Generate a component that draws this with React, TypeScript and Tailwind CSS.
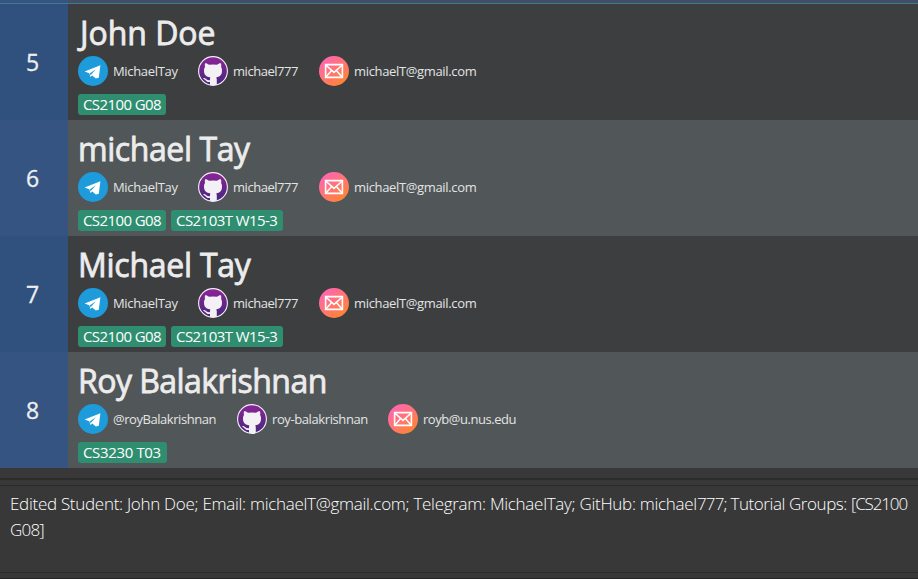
import type { ReactNode } from "react";

type Field = { text: string; cls: string };
type Student = {
  id: number;
  name: Field;
  telegram: Field;
  github: Field;
  email: Field;
  tags: Field[];
};

const michaelT: Field = { text: "MichaelTay", cls: "w-[65px] tracking-[-0.33px]" };
const michaelG: Field = { text: "michael777", cls: "w-[66px] tracking-[-0.47px]" };
const michaelE: Field = { text: "michaelT@gmail.com", cls: "tracking-[-0.34px]" };
const cs2100: Field = { text: "CS2100 G08", cls: "w-[88px] tracking-[-0.6px]" };
const cs2103: Field = { text: "CS2103T W15-3", cls: "w-[112px] tracking-[-0.55px]" };

const students: Student[] = [
  { id: 5, name: { text: "John Doe", cls: "pl-[2px] tracking-[-0.05px]" }, telegram: michaelT, github: michaelG, email: michaelE, tags: [cs2100] },
  { id: 6, name: { text: "michael Tay", cls: "tracking-[-0.42px]" }, telegram: michaelT, github: michaelG, email: michaelE, tags: [cs2100, cs2103] },
  { id: 7, name: { text: "Michael Tay", cls: "tracking-[-0.25px]" }, telegram: michaelT, github: michaelG, email: michaelE, tags: [cs2100, cs2103] },
  {
    id: 8,
    name: { text: "Roy Balakrishnan", cls: "tracking-[-0.55px]" },
    telegram: { text: "@royBalakrishnan", cls: "w-[104px] tracking-[-0.45px]" },
    github: { text: "roy-balakrishnan", cls: "w-[96px] tracking-[-0.4px]" },
    email: { text: "royb@u.nus.edu", cls: "tracking-[-0.45px]" },
    tags: [{ text: "CS3230 T03", cls: "w-[89px] tracking-[-0.35px]" }],
  },
];

function TelegramIcon() {
  return (
    <svg viewBox="0 0 30 30" className="size-[30px] shrink-0">
      <circle cx="15" cy="15" r="15" fill="#1e9bdb" />
      <path d="M6.6 15.6 22.4 9.2 20.8 21.8 17.8 22.4 14.2 19.4 12.4 21 11.3 17.2Z" fill="#fff" />
      <path d="M12 17.2 18 13.2 13.4 18.2 12.5 19.8Z" fill="#1e9bdb" />
    </svg>
  );
}

function GithubIcon() {
  return (
    <svg viewBox="0 0 30 30" className="size-[30px] shrink-0">
      <defs>
        <linearGradient id="purple" x1="0" y1="0" x2="0" y2="1">
          <stop offset="0" stopColor="#8c2597" />
          <stop offset="1" stopColor="#46277f" />
        </linearGradient>
      </defs>
      <circle cx="15" cy="15" r="14.4" fill="url(#purple)" stroke="#f5eff8" strokeWidth="1.1" />
      <path
        d="M7 7.4C8.4 7.2 9.8 8 11 8.8Q15 8.2 19 8.8C20.2 8 21.6 7.2 23 7.4Q23.6 9.2 23.1 11 24.2 12.6 24 15C23.8 19.2 21.8 20.8 18.2 21.4 18.8 22.2 18.8 23.2 18.8 24.4V29H12V26C8.2 26.6 8 23.9 5.4 22.7 4.9 22.1 6.2 21.9 7 22.3 8.8 23.3 9 24.8 12 24.2 12 22.8 12.1 22 12.4 21.4 8.4 20.8 6.2 19.2 6 15Q5.8 12.6 7 11 6.5 9.2 7 7.4Z"
        fill="#f3f1f5"
      />
    </svg>
  );
}

function MailIcon() {
  return (
    <svg viewBox="0 0 30 30" className="size-[30px] shrink-0">
      <defs>
        <linearGradient id="sunset" x1="0.1" y1="0.1" x2="0.8" y2="1">
          <stop offset="0" stopColor="#ff65b5" />
          <stop offset="1" stopColor="#ff862d" />
        </linearGradient>
      </defs>
      <circle cx="15" cy="15" r="15" fill="url(#sunset)" />
      <g fill="none" stroke="#fff">
        <path d="M6.6 8.6H23.4V21.4H6.6Z" strokeWidth="1.6" />
        <path d="M7 9.2 15 16.4 23 9.2M7 21 12.6 14.6M23 21 17.4 14.6" strokeWidth="1.5" />
      </g>
    </svg>
  );
}

function Contact({ icon, field }: { icon: ReactNode; field: Field }) {
  return (
    <div className="flex items-center gap-[5px]">
      {icon}
      <span className={`whitespace-nowrap text-[13px] leading-[18px] text-[#e3e4e4] ${field.cls}`}>{field.text}</span>
    </div>
  );
}

function Row({ student, index }: { student: Student; index: number }) {
  const even = index % 2 === 1;
  return (
    <div className={`flex h-[116px] ${even ? "bg-[#515658]" : "bg-[#3c3e3f]"}`}>
      <div className={`flex w-[68px] shrink-0 items-center justify-center pr-[3px] text-[23px] text-[#eeeff0] [-webkit-text-stroke:0.3px_#eeeff0] ${even ? "bg-[#355481]" : "bg-[#30507d]"}`}>
        {student.id}
      </div>
      <div className="pl-[10px] pt-[8px]">
        <div className={`h-[44px] whitespace-nowrap text-[32px] leading-[42px] text-[#ececec] [-webkit-text-stroke:0.8px_#ececec] ${student.name.cls}`}>{student.name.text}</div>
        <div className="flex gap-[20px]">
          <Contact icon={<TelegramIcon />} field={student.telegram} />
          <Contact icon={<GithubIcon />} field={student.github} />
          <Contact icon={<MailIcon />} field={student.email} />
        </div>
        <div className="mt-[8px] flex gap-[5px]">
          {student.tags.map((tag) => (
            <span key={tag.text} className={`h-[21px] whitespace-nowrap rounded-[3px] bg-[#2f8e6f] pl-[5px] text-[15px] leading-[21px] text-white ${tag.cls}`}>
              {tag.text}
            </span>
          ))}
        </div>
      </div>
    </div>
  );
}

export default function App() {
  return (
    <div className="h-[579px] w-[918px] overflow-hidden bg-[#383838] font-['Open_Sans','Noto_Sans',sans-serif]">
      <div className="flex h-[3px]">
        <div className="w-[68px] bg-[#355481]" />
        <div className="flex-1 bg-[#424e62]" />
      </div>
      <div className="h-px bg-[#3e7b91]" />
      {students.map((s, i) => (
        <Row key={s.id} student={s} index={i} />
      ))}
      <div className="h-[10px]" />
      <div className="h-[2px] bg-[#2b2b2b]" />
      <div className="h-[5px]" />
      <div className="h-px bg-[#2b2b2b]" />
      <div className="h-[86px] pl-[10px] pt-[5px] text-[17px] font-light leading-[26px] text-white">
        <div className="whitespace-nowrap tracking-[-0.29px]">
          Edited Student: John Doe; Email: michaelT@gmail.com; Telegram: MichaelTay; GitHub: michael
          <span className="tracking-[-0.8px]">777; </span>
          <span className="tracking-[-0.43px]">Tutorial Groups: </span>
          <span className="tracking-[-1.15px]">[CS2100</span>
        </div>
        <div className="tracking-[-0.8px]">G08]</div>
      </div>
      <div className="h-px bg-[#2b2b2b]" />
      <div className="h-[5px]" />
      <div className="h-px bg-[#252525]" />
    </div>
  );
}
